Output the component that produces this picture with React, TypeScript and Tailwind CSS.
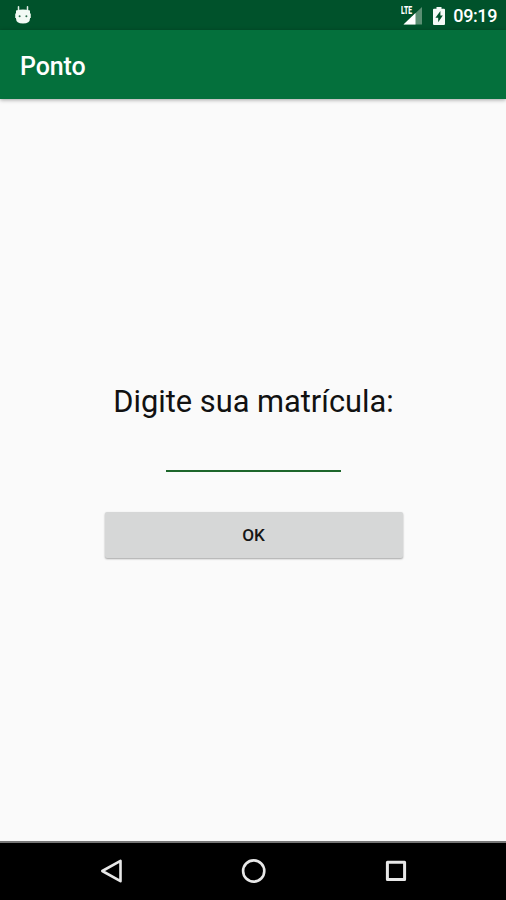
import { useState } from 'react';

function DebugIcon() {
  return (
    <svg width="16" height="19" viewBox="0 0 16 19" fill="none">
      <path d="M3.5 .8V5M12.5 .8V5" stroke="#e6f1ea" strokeWidth="1.5" strokeLinecap="round" />
      <path d="M1 4.6Q8 2.4 15 4.6V12.5Q15 17.6 8 17.6T1 12.5Z" fill="#f3faf5" />
      <path d="M.5 7.5V12M15.5 7.5V12" stroke="#b9d3c4" strokeWidth="1" />
      <circle cx="4.6" cy="10.2" r="1" fill="#2b6b4b" />
      <circle cx="11.4" cy="10.2" r="1" fill="#2b6b4b" />
    </svg>
  );
}

function SignalIcon() {
  return (
    <div className="relative h-[19px] w-[22px]">
      <svg className="absolute inset-0" width="22" height="19" viewBox="0 0 22 19">
        <path d="M22 1V18.5H3.5Z" fill="#5b8f73" />
        <path d="M15.5 7V18.5H3.5Z" fill="#ffffff" />
        <path d="M0 0H12.5V9.5H0Z" fill="#00522b" />
      </svg>
      <span className="absolute top-0 left-px origin-top-left scale-x-[0.68] text-[10px] leading-[9px] font-black text-white">
        LTE
      </span>
    </div>
  );
}

function BatteryIcon() {
  return (
    <svg width="12" height="19" viewBox="0 0 12 19">
      <path d="M3.5 1H8.5V2.8H11Q12 2.8 12 3.8V18Q12 19 11 19H1Q0 19 0 18V3.8Q0 2.8 1 2.8H3.5Z" fill="#f5faf7" />
      <path d="M7.4 5 2.4 11.8H5.2V16.2L9.8 9.4H7.4Z" fill="#00522b" />
    </svg>
  );
}

function StatusBar() {
  return (
    <div className="flex h-[30px] items-center bg-[#00522b] pr-[9px] pl-[15px]">
      <DebugIcon />
      <div className="ml-auto flex items-center">
        <SignalIcon />
        <div className="mr-2 ml-[11px]">
          <BatteryIcon />
        </div>
        <span className="pt-[2px] text-[18px] leading-none font-medium tracking-[-0.4px] text-white">09:19</span>
      </div>
    </div>
  );
}

function NavigationBar() {
  return (
    <nav className="flex h-[59px] items-center justify-between border-t-2 border-[#777777] bg-black px-[99px] pb-[2px]">
      <button aria-label="Voltar">
        <svg width="24" height="26" viewBox="0 0 24 26" fill="none" stroke="#e8e8e8" strokeWidth="2.6" strokeLinejoin="round">
          <path d="M3.3 13 21.5 2.8V23.2Z" />
        </svg>
      </button>
      <button aria-label="Início">
        <svg width="26" height="26" viewBox="0 0 26 26" fill="none" stroke="#e8e8e8" strokeWidth="2.6">
          <circle cx="12.7" cy="13" r="10.6" />
        </svg>
      </button>
      <button aria-label="Recentes">
        <svg width="22" height="26" viewBox="0 0 22 26" fill="none" stroke="#e8e8e8" strokeWidth="3" strokeLinejoin="round">
          <path d="M2.4 4.2H19.6V21.4H2.4Z" />
        </svg>
      </button>
    </nav>
  );
}

export default function App() {
  const [matricula, setMatricula] = useState('');

  return (
    <div className="flex h-screen w-full flex-col overflow-hidden bg-[#fafafa] font-['Roboto',sans-serif]">
      <StatusBar />
      <header className="flex h-[69px] items-center bg-[#04703c] px-5 shadow-[0_1px_4px_rgba(0,0,0,0.35)]">
        <h1 className="pt-[3px] text-[25px] leading-none font-medium tracking-[-0.1px] text-white">Ponto</h1>
      </header>

      <main className="flex flex-1 flex-col items-center pt-[285px] pl-px">
        <label htmlFor="matricula" className="text-[30.8px] leading-9 whitespace-nowrap text-[#111111]">
          Digite sua matrícula:
        </label>
        <input
          id="matricula"
          value={matricula}
          onChange={(e) => setMatricula(e.target.value)}
          className="mt-[18px] h-[34px] w-[175px] border-b-2 border-[#1d662b] bg-transparent text-center text-xl outline-none"
        />
        <button className="mt-10 h-[46px] w-[298px] rounded-[2px] bg-[#d6d7d7] pt-[2px] text-[17.2px] font-medium text-[#161616] shadow-[0_1px_2px_rgba(0,0,0,0.35)]">
          OK
        </button>
      </main>

      <NavigationBar />
    </div>
  );
}
